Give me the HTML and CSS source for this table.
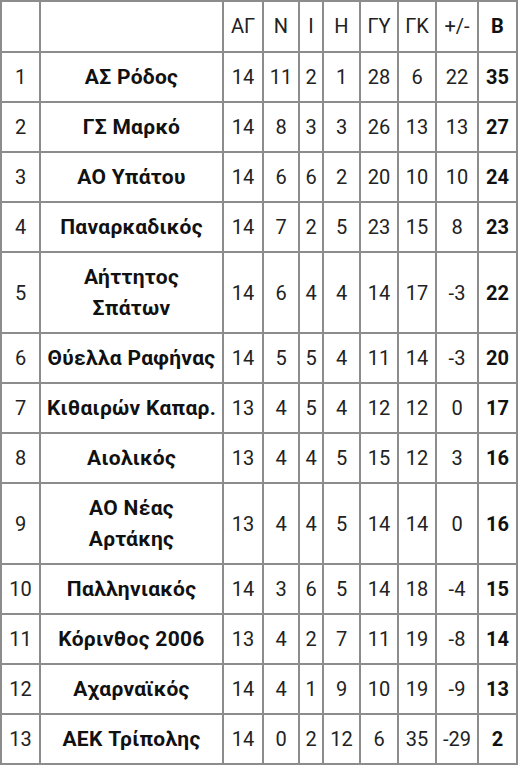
FILE: index.html
```html
<!DOCTYPE html>
<html lang="el">
<head>
<meta charset="utf-8">
<title>Βαθμολογία</title>
<link rel="stylesheet" href="styles.css">
</head>
<body>
<table class="standings">
<colgroup>
<col class="c-pos"><col class="c-team"><col class="c-ag"><col class="c-n"><col class="c-i"><col class="c-h"><col class="c-gy"><col class="c-gk"><col class="c-diff"><col class="c-pts">
</colgroup>
<thead>
<tr><th></th><th></th><th>ΑΓ</th><th>Ν</th><th>Ι</th><th>Η</th><th>ΓΥ</th><th>ΓΚ</th><th>+/-</th><th class="pts">Β</th></tr>
</thead>
<tbody>
<tr><td>1</td><td class="team">ΑΣ Ρόδος</td><td>14</td><td>11</td><td>2</td><td>1</td><td>28</td><td>6</td><td>22</td><td class="pts">35</td></tr>
<tr><td>2</td><td class="team">ΓΣ Μαρκό</td><td>14</td><td>8</td><td>3</td><td>3</td><td>26</td><td>13</td><td>13</td><td class="pts">27</td></tr>
<tr><td>3</td><td class="team">ΑΟ Υπάτου</td><td>14</td><td>6</td><td>6</td><td>2</td><td>20</td><td>10</td><td>10</td><td class="pts">24</td></tr>
<tr><td>4</td><td class="team">Παναρκαδικός</td><td>14</td><td>7</td><td>2</td><td>5</td><td>23</td><td>15</td><td>8</td><td class="pts">23</td></tr>
<tr><td>5</td><td class="team">Αήττητος<br>Σπάτων</td><td>14</td><td>6</td><td>4</td><td>4</td><td>14</td><td>17</td><td>-3</td><td class="pts">22</td></tr>
<tr><td>6</td><td class="team">Θύελλα Ραφήνας</td><td>14</td><td>5</td><td>5</td><td>4</td><td>11</td><td>14</td><td>-3</td><td class="pts">20</td></tr>
<tr><td>7</td><td class="team">Κιθαιρών Καπαρ.</td><td>13</td><td>4</td><td>5</td><td>4</td><td>12</td><td>12</td><td>0</td><td class="pts">17</td></tr>
<tr><td>8</td><td class="team">Αιολικός</td><td>13</td><td>4</td><td>4</td><td>5</td><td>15</td><td>12</td><td>3</td><td class="pts">16</td></tr>
<tr><td>9</td><td class="team">ΑΟ Νέας<br>Αρτάκης</td><td>13</td><td>4</td><td>4</td><td>5</td><td>14</td><td>14</td><td>0</td><td class="pts">16</td></tr>
<tr><td>10</td><td class="team">Παλληνιακός</td><td>14</td><td>3</td><td>6</td><td>5</td><td>14</td><td>18</td><td>-4</td><td class="pts">15</td></tr>
<tr><td>11</td><td class="team">Κόρινθος 2006</td><td>13</td><td>4</td><td>2</td><td>7</td><td>11</td><td>19</td><td>-8</td><td class="pts">14</td></tr>
<tr><td>12</td><td class="team">Αχαρναϊκός</td><td>14</td><td>4</td><td>1</td><td>9</td><td>10</td><td>19</td><td>-9</td><td class="pts">13</td></tr>
<tr><td>13</td><td class="team">ΑΕΚ Τρίπολης</td><td>14</td><td>0</td><td>2</td><td>12</td><td>6</td><td>35</td><td>-29</td><td class="pts">2</td></tr>
</tbody>
</table>
</body>
</html>
```

FILE: styles.css
```css
html, body {
  margin: 0;
  padding: 0;
  background: #ffffff;
}

body {
  font-family: Roboto, "Noto Sans", "DejaVu Sans", sans-serif;
  font-size: 20px;
  color: #222222;
}

.standings {
  border-collapse: collapse;
  table-layout: fixed;
  width: 518px;
}

.c-pos { width: 39px; }
.c-team { width: 183px; }
.c-ag { width: 40px; }
.c-n { width: 36px; }
.c-i { width: 24px; }
.c-h { width: 37px; }
.c-gy { width: 38px; }
.c-gk { width: 38px; }
.c-diff { width: 42px; }
.c-pts { width: 39px; }

.standings th,
.standings td {
  border: 2px solid #8c8c8c;
  padding: 9px 0 8px;
  line-height: 31px;
  text-align: center;
  font-weight: 400;
  white-space: nowrap;
  overflow: hidden;
}

.standings thead th {
  padding-top: 9px;
  padding-bottom: 9px;
}

.standings .team {
  font-size: 21px;
  letter-spacing: 0.3px;
  font-weight: 700;
  color: #111111;
  white-space: normal;
}

.standings .pts {
  font-weight: 700;
  color: #111111;
}
```
